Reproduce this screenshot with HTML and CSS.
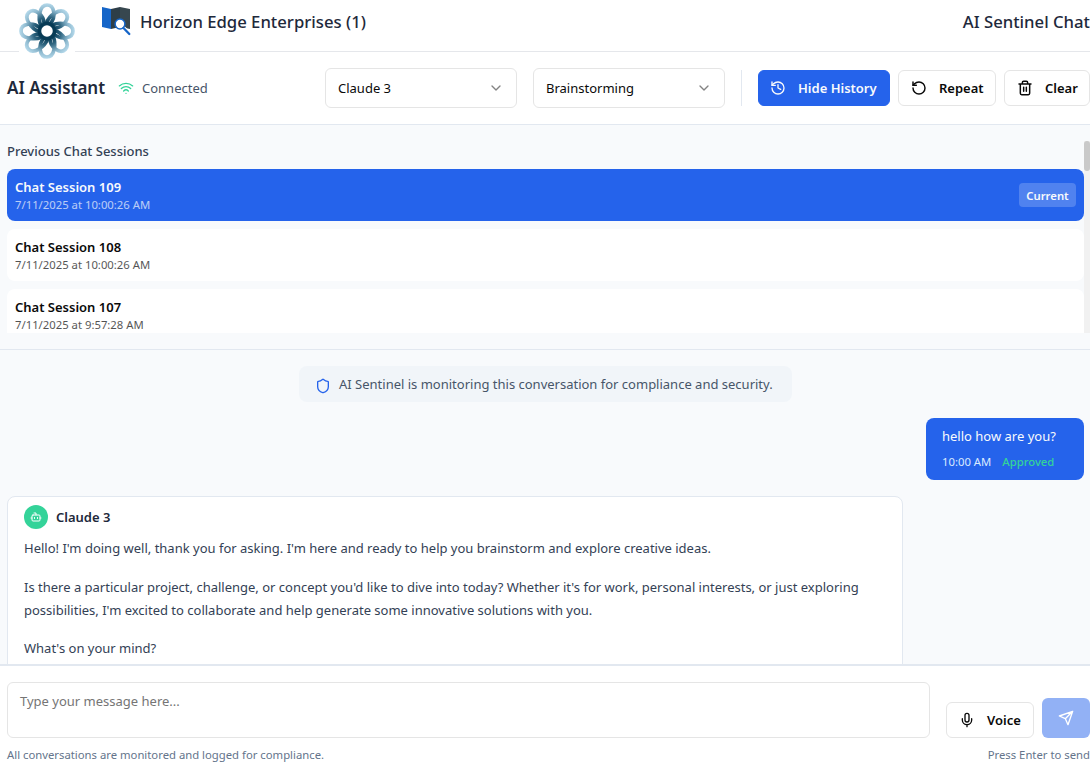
FILE: index.html
```html
<!DOCTYPE html>
<html lang="en">
<head>
<meta charset="utf-8">
<title>AI Sentinel Chat</title>
<link rel="stylesheet" href="styles.css">
</head>
<body>
<div class="app">
  <header class="topbar">
    <div class="logo">
      <svg width="56" height="59" viewBox="-28 -31 56 59">
        <defs>
          <radialGradient id="petal" gradientUnits="userSpaceOnUse" cx="0" cy="0" r="28">
            <stop offset="0.25" stop-color="#073b55"/>
            <stop offset="0.5" stop-color="#2f6580"/>
            <stop offset="0.78" stop-color="#8db9cf"/>
            <stop offset="1" stop-color="#b9dced"/>
          </radialGradient>
          <path id="leaf" d="M-6 -5C-9.500 -13 -7.500 -26 0 -26C7.500 -26 9.500 -14 3 -7" fill="none" stroke="url(#petal)" stroke-width="3.700"/>
        </defs>
        <use href="#leaf"/><use href="#leaf" transform="rotate(45)"/><use href="#leaf" transform="rotate(90)"/><use href="#leaf" transform="rotate(135)"/><use href="#leaf" transform="rotate(180)"/><use href="#leaf" transform="rotate(225)"/><use href="#leaf" transform="rotate(270)"/><use href="#leaf" transform="rotate(315)"/>
        <circle r="7.500" fill="#fff" stroke="#073b55" stroke-width="3.500"/>
      </svg>
    </div>
    <svg class="map" width="30" height="30" viewBox="0 0 30 30">
      <path d="M1 1L10 3V23L1 21Z" fill="#1565c8"/>
      <path d="M10 3L19 1V21L10 23Z" fill="#2d3e48"/>
      <path d="M19 1L29 3V23L19 21Z" fill="#37474f"/>
      <path d="M22.500 22L28.500 28" stroke="#fff" stroke-width="4"/>
      <circle cx="19" cy="18" r="4.900" fill="#fff" stroke="#1565c8" stroke-width="1.500"/>
      <path d="M22.500 22L28.300 28" stroke="#1565c8" stroke-width="2.300"/>
    </svg>
    <span class="company">Horizon Edge Enterprises (1)</span>
    <span class="product">AI Sentinel Chat</span>
  </header>

  <div class="toolbar">
    <h1 class="title">AI Assistant</h1>
    <svg class="wifi" width="16" height="16" viewBox="0 0 24 24"><path d="M12 20h.01M2 8.820a15 15 0 0 1 20 0M5 12.859a10 10 0 0 1 14 0M8.500 16.429a5 5 0 0 1 7 0"/></svg>
    <span class="connected">Connected</span>
    <div class="select first"><span class="opt-a">Claude 3</span><svg width="16" height="16" viewBox="0 0 24 24"><path d="m6 9 6 6 6-6"/></svg></div>
    <div class="select"><span class="opt-b">Brainstorming</span><svg width="16" height="16" viewBox="0 0 24 24"><path d="m6 9 6 6 6-6"/></svg></div>
    <div class="divider"></div>
    <button class="btn primary"><svg width="16" height="16" viewBox="0 0 24 24"><path d="M3 12a9 9 0 1 0 9-9 9.750 9.750 0 0 0-6.740 2.740L3 8"/><path d="M3 3v5h5M12 7v5l4 2"/></svg><span class="t-hide">Hide History</span></button>
    <button class="btn repeat"><svg width="16" height="16" viewBox="0 0 24 24"><path d="M3 12a9 9 0 1 0 9-9 9.750 9.750 0 0 0-6.740 2.740L3 8"/><path d="M3 3v5h5"/></svg><span>Repeat</span></button>
    <button class="btn clear"><svg width="16" height="16" viewBox="0 0 24 24"><path d="M3 6h18M19 6v14c0 1-1 2-2 2H7c-1 0-2-1-2-2V6M8 6V4c0-1 1-2 2-2h4c1 0 2 1 2 2v2M10 11v6M14 11v6"/></svg><span>Clear</span></button>
  </div>

  <section class="history">
    <div class="sessions">
      <h2 class="caption">Previous Chat Sessions</h2>
      <div class="session active">
        <div><div class="name">Chat Session 109</div><div class="date">7/11/2025 at 10:00:26 AM</div></div>
        <span class="badge">Current</span>
      </div>
      <div class="session"><div><div class="name">Chat Session 108</div><div class="date">7/11/2025 at 10:00:26 AM</div></div></div>
      <div class="session"><div><div class="name">Chat Session 107</div><div class="date">7/11/2025 at 9:57:28 AM</div></div></div>
    </div>
    <div class="track"><div class="thumb"></div></div>
  </section>

  <main class="messages">
    <div class="notice"><svg width="16" height="16" viewBox="0 0 24 24"><path d="M20 13c0 5-3.500 7.500-7.660 8.950a1 1 0 0 1-.67-.01C7.500 20.500 4 18 4 13V6a1 1 0 0 1 1-1c2 0 4.500-1.200 6.240-2.720a1.170 1.170 0 0 1 1.520 0C14.510 3.810 17 5 19 5a1 1 0 0 1 1 1z"/></svg><span>AI Sentinel is monitoring this conversation for compliance and security.</span></div>
    <div class="bubble">
      <div class="said">hello how are you?</div>
      <div class="meta"><span class="time">10:00 AM</span><span class="approved">Approved</span></div>
    </div>
    <article class="reply">
      <div class="author"><span class="avatar"><svg width="12" height="12" viewBox="0 0 24 24"><path d="M12 8V4H8"/><rect width="16" height="12" x="4" y="8" rx="2"/><path d="M2 14h2M20 14h2M15 13v2M9 13v2"/></svg></span><span class="who">Claude 3</span></div>
      <p class="p1">Hello! I'm doing well, thank you for asking. I'm here and ready to help you brainstorm and explore creative ideas.</p>
      <p><span class="l1">Is there a particular project, challenge, or concept you'd like to dive into today? Whether it's for work, personal interests, or just exploring</span><br><span class="l2">possibilities, I'm excited to collaborate and help generate some innovative solutions with you.</span></p>
      <p class="p3">What's on your mind?</p>
    </article>
  </main>

  <footer class="composer">
    <div class="row">
      <div class="input">Type your message here...</div>
      <button class="btn voice"><svg width="16" height="16" viewBox="0 0 24 24"><path d="M12 2a3 3 0 0 0-3 3v7a3 3 0 0 0 6 0V5a3 3 0 0 0-3-3Z"/><path d="M19 10v2a7 7 0 0 1-14 0v-2M12 19v3"/></svg><span>Voice</span></button>
      <button class="send"><svg width="16" height="16" viewBox="0 0 24 24"><path d="m22 2-7 20-4-9-9-4ZM22 2 11 13"/></svg></button>
    </div>
    <div class="hints"><span class="logged">All conversations are monitored and logged for compliance.</span><span class="press">Press Enter to send</span></div>
  </footer>
</div>
</body>
</html>
```

FILE: styles.css
```css
* { box-sizing: border-box; margin: 0; padding: 0; }
body { width: 1090px; height: 767px; overflow: hidden; background: #fff; font-family: "Noto Sans", "Open Sans", sans-serif; font-size: 13px; color: #1e293b; white-space: nowrap; }
svg { flex: none; fill: none; stroke: currentColor; stroke-width: 2; stroke-linecap: round; stroke-linejoin: round; }
button { font: inherit; }
.app { display: flex; flex-direction: column; height: 767px; }

.topbar { position: relative; display: flex; height: 52px; padding-left: 100px; border-bottom: 1px solid #e5e7eb; flex: none; }
.logo { position: absolute; left: 19px; top: 0; width: 56px; height: 59px; background: #fff; z-index: 1; }
.logo svg { display: block; stroke: none; }
.map { margin: 6px 9px 0 1px; stroke: none; }
.company, .product { line-height: 24px; margin-top: 10px; font-size: 16.700px; font-weight: 500; }
.product { margin-left: auto; }

.toolbar { display: flex; align-items: center; height: 73px; padding-left: 7px; border-bottom: 1px solid #e2e8f0; flex: none; }
.title { width: 111px; font-size: 17px; font-weight: 600; line-height: 28px; }
.wifi { color: #34d399; }
.connected { margin-left: 8px; color: #475569; line-height: 20px; }
.select { display: flex; align-items: center; justify-content: space-between; width: 192px; height: 40px; padding: 0 12px; margin-left: 16px; border: 1px solid #e5e5e5; border-radius: 6px; color: #0a0a0a; line-height: 20px; }
.select.first { margin-left: auto; }
.select svg { opacity: .5; }
.divider { width: 1px; height: 36px; margin: 0 16px; background: #e2e8f0; }
.btn { display: flex; align-items: center; height: 36px; padding: 0 12px 0 11px; border: 1px solid #e5e5e5; border-radius: 6px; background: #fff; color: #0a0a0a; font-weight: 600; line-height: 20px; }
.btn svg { margin-right: 12px; stroke-width: 2; }
.btn.primary { width: 132px; background: #2563eb; border-color: #2563eb; color: #f8fafc; }
.repeat { width: 98px; margin-left: 8px; padding-left: 12px; }
.repeat svg, .clear svg { stroke-width: 2.200; }
.clear { width: 86px; margin-left: 8px; padding-left: 12px; }

.history { display: flex; height: 225px; padding: 16px 0 16px 7px; background: #f8fafc; border-bottom: 1px solid #e2e8f0; flex: none; }
.sessions { flex: 1; overflow: hidden; }
.caption { height: 20px; margin-bottom: 8px; font-size: 13px; font-weight: 500; line-height: 20px; color: #334155; }
.session { display: flex; align-items: center; justify-content: space-between; height: 52px; padding: 8px; margin-bottom: 8px; border-radius: 8px; background: #fff; color: #0a0a0a; }
.name { font-weight: 600; line-height: 20px; font-size: 13px; }
.date { font-size: 11.300px; line-height: 16px; opacity: .7; }
.session.active { background: #2563eb; color: #f8fafc; }
.badge { width: 57px; height: 24px; border-radius: 4px; background: rgba(255,255,255,.2); font-size: 11.300px; font-weight: 600; line-height: 25px; text-align: center; }
.track { width: 6px; background: #f1f1f1; }
.thumb { height: 30px; border-radius: 3px; background: #c9c9c9; }

.messages { display: flex; flex-direction: column; height: 314px; padding: 16px 6px 0 7px; overflow: hidden; background: #f8fafc; flex: none; }
.notice { display: flex; align-items: center; align-self: center; width: 493px; height: 36px; padding-left: 16px; border-radius: 8px; background: #f1f5f9; color: #475569; line-height: 20px; flex: none; }
.notice svg { margin: 4px 8px 0 0; color: #2563eb; }
.bubble { align-self: flex-end; width: 158px; height: 62px; margin-top: 16px; padding: 8px 16px; border-radius: 8px; background: #2563eb; color: #f8fafc; flex: none; }
.said { line-height: 20px; }
.meta { display: flex; gap: 11px; margin-top: 8px; font-size: 11.300px; line-height: 16px; }
.time { color: #dbeafe; }
.approved { color: #34d399; font-weight: 500; }
.reply { width: 896px; height: 190px; margin-top: 16px; padding: 8px 16px; border: 1px solid #e2e8f0; border-radius: 8px; background: #fff; color: #334155; flex: none; }
.author { display: flex; align-items: center; height: 24px; margin-bottom: 8px; }
.avatar { display: flex; align-items: center; justify-content: center; width: 24px; height: 24px; margin-right: 8px; border-radius: 50%; background: #34d399; color: #fff; }
.who { color: #1e293b; font-weight: 600; }
.reply p { margin-bottom: 16px; line-height: 22.750px; }

.composer { padding: 16px 0 0 7px; border-top: 2px solid #e2e8f0; background: #fff; flex: 1; }
.row { display: flex; align-items: flex-end; height: 56px; }
.input { width: 923px; height: 56px; padding: 8px 12px; border: 1px solid #e5e5e5; border-radius: 6px; color: #757575; line-height: 20px; }
.voice { width: 88px; margin: 0 8px 0 16px; padding-left: 12px; }
.send { display: flex; align-items: center; justify-content: center; width: 48px; height: 40px; border: 0; border-radius: 6px; background: #92b1f5; color: #fff; }
.hints { display: flex; justify-content: space-between; margin-top: 8px; font-size: 11.300px; line-height: 18px; color: #64748b; }
```
